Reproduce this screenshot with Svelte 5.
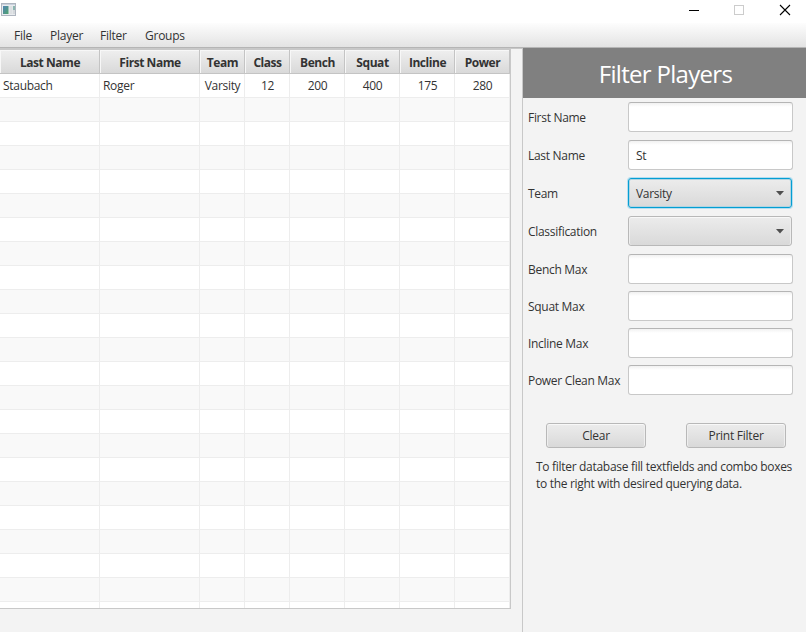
<script>
  const menus = [
    { name: 'File', width: 18 },
    { name: 'Player', width: 32 },
    { name: 'Filter', width: 27 },
    { name: 'Groups', width: 39 }
  ];
  const headings = ['Last Name', 'First Name', 'Team', 'Class', 'Bench', 'Squat', 'Incline', 'Power'];
  const player = ['Staubach', 'Roger', 'Varsity', '12', '200', '400', '175', '280'];
  const emptyRows = Array.from({ length: 22 });
  const fields = [
    { label: 'First Name', type: 'text', value: '' },
    { label: 'Last Name', type: 'text', value: 'St' },
    { label: 'Team', type: 'combo', value: 'Varsity', focused: true },
    { label: 'Classification', type: 'combo', value: '' },
    { label: 'Bench Max', type: 'text', value: '' },
    { label: 'Squat Max', type: 'text', value: '' },
    { label: 'Incline Max', type: 'text', value: '' },
    { label: 'Power Clean Max', type: 'text', value: '' }
  ];
</script>

<div class="window">
  <header class="titlebar">
    <svg class="appicon" width="16" height="14" viewBox="0 0 16 14">
      <defs>
        <linearGradient id="pane" x1="0" y1="0" x2="1" y2="1">
          <stop offset="0" stop-color="#5183b5" />
          <stop offset="1" stop-color="#4fa36c" />
        </linearGradient>
      </defs>
      <rect x=".5" y=".5" width="14" height="12" fill="#e9ecef" stroke="#aeb5bf" />
      <path d="M1 1.5h13" stroke="#c9d1dc" />
      <rect x="2" y="3" width="5.500" height="8" fill="url(#pane)" />
      <rect x="8.500" y="3" width="3" height="8" fill="#dcdfe2" />
      <rect x="12" y="3" width="2" height="4" fill="#8bb6b0" />
      <rect x="12" y="7" width="2" height="4" fill="#d4d8dc" />
    </svg>
    <svg class="controls" width="104" height="20" viewBox="0 0 104 20">
      <path d="M1 10.5h10" stroke="#000" />
      <rect x="46.500" y="5.500" width="9" height="9" fill="none" stroke="#ccc" />
      <path d="M92 5l10 10M102 5l-10 10" stroke="#000" stroke-width="1.100" />
    </svg>
  </header>

  <nav class="menubar">
    {#each menus as menu}
      <span style:width="{menu.width}px">{menu.name}</span>
    {/each}
  </nav>

  <main>
    <section class="left">
      <div class="table">
        <div class="row head">
          {#each headings as heading}<div class="cell">{heading}</div>{/each}
        </div>
        <div class="row">
          {#each player as value, i}<div class="cell" class:name={i < 2}>{value}</div>{/each}
        </div>
        {#each emptyRows as _, r}
          <div class="row" class:odd={r % 2 === 0}>
            {#each headings as _}<div class="cell"></div>{/each}
          </div>
        {/each}
      </div>
    </section>

    <aside>
      <h1>Filter Players</h1>
      <form>
        {#each fields as field, i}
          <div class="field" class:tight={i > 3}>
            <span class="label">{field.label}</span>
            {#if field.type === 'combo'}
              <div class="combo" class:focused={field.focused}>
                <span>{field.value}</span>
                <svg width="8" height="5" viewBox="0 0 8 5"><path d="M0 0h8L4 4.500z" fill="#4f4f4f" /></svg>
              </div>
            {:else}
              <div class="input">{field.value}</div>
            {/if}
          </div>
        {/each}
      </form>
      <div class="buttons">
        <button type="button">Clear</button>
        <button type="button">Print Filter</button>
      </div>
      <p>To filter database fill textfields and combo boxes<br />to the right with desired querying data.</p>
    </aside>
  </main>
</div>

<style>
  :global(body) { margin: 0; }
  .window {
    width: 806px;
    height: 632px;
    overflow: hidden;
    display: flex;
    flex-direction: column;
    background: #f3f3f3;
    color: #333;
    font: 12px/16px "Open Sans", "Noto Sans", sans-serif;
    letter-spacing: -0.3px;
    white-space: nowrap;
  }
  .titlebar {
    height: 23px;
    display: flex;
    justify-content: space-between;
    background: #fff;
  }
  .appicon { margin: 3px 0 0 1px; }
  .controls { margin-right: 14px; }
  .menubar {
    box-sizing: border-box;
    height: 25px;
    padding: 5px 14px 0;
    display: flex;
    gap: 18px;
    letter-spacing: -0.25px;
    background: linear-gradient(#fdfdfd, #e3e3e3);
    border-bottom: 1px solid #b5b5b5;
  }
  main { flex: 1; display: flex; min-height: 0; }
  .left {
    box-sizing: border-box;
    width: 523px;
    border: solid #c8c8c8;
    border-width: 1px 1px 0 0;
  }
  .table {
    box-sizing: border-box;
    width: 511px;
    height: 560px;
    overflow: hidden;
    border: solid #c8c8c8;
    border-width: 1px 1px 1px 0;
    background: #fff;
  }
  .row {
    display: grid;
    grid-template-columns: 100px 100px 45px 45px repeat(4, 55px);
    height: 24px;
  }
  .cell {
    box-sizing: border-box;
    border: solid #ededed;
    border-width: 0 1px 1px 0;
    text-align: center;
    padding: 4px 0 0 1px;
  }
  .cell.name { text-align: left; padding-left: 3px; }
  .odd { background: #f9f9f9; }
  .head .cell {
    padding-top: 5px;
    border-color: #c4c4c4;
    background: linear-gradient(#efefef, #d9d9d9);
    box-shadow: inset 1px 1px #f7f7f7;
    font-weight: 700;
    letter-spacing: -0.45px;
  }
  aside { flex: 1; display: flex; flex-direction: column; }
  h1 {
    margin: 0;
    height: 50px;
    background: #808080;
    color: #fff;
    text-align: center;
    font-size: 24px;
    line-height: 51px;
    font-weight: 400;
    padding-left: 2px;
    letter-spacing: -0.7px;
  }
  form { display: flex; flex-direction: column; padding: 4px 13px 0 5px; }
  .field { display: flex; height: 38px; }
  .field.tight { height: 37px; }
  .label { width: 100px; padding-top: 8px; }
  .input, .combo { box-sizing: border-box; height: 30px; border-radius: 3px; padding: 7px; }
  .input {
    width: 165px;
    border: 1px solid #c8c8c8;
    border-top-color: #b5b5b5;
    background: linear-gradient(#f1f1f1, #fff 4px);
  }
  .combo {
    width: 164px;
    display: flex;
    align-items: flex-start;
    justify-content: space-between;
    border: 1px solid #b8b8b8;
    background: linear-gradient(#ececec, #d9d9d9);
    box-shadow: inset 0 1px #f8f8f8, inset 1px 0 #eee, inset -1px 0 #eee;
  }
  .combo svg { margin-top: 5px; }
  .combo.focused {
    border-color: #039ed3;
    box-shadow: 0 0 0 1px #b4def0, inset 0 0 0 1px #b1d4e1;
  }
  .buttons { display: flex; gap: 40px; padding: 21px 0 0 23px; }
  button {
    width: 100px;
    height: 25px;
    padding: 0;
    border: 1px solid #b8b8b8;
    border-radius: 3px;
    background: linear-gradient(#ececec, #d9d9d9);
    box-shadow: inset 0 1px #f8f8f8, inset 1px 0 #eee, inset -1px 0 #eee;
    color: #333;
    font: inherit;
    letter-spacing: -0.25px;
  }
  p { margin: 10px 0 0 13px; line-height: 17px; }
</style>
